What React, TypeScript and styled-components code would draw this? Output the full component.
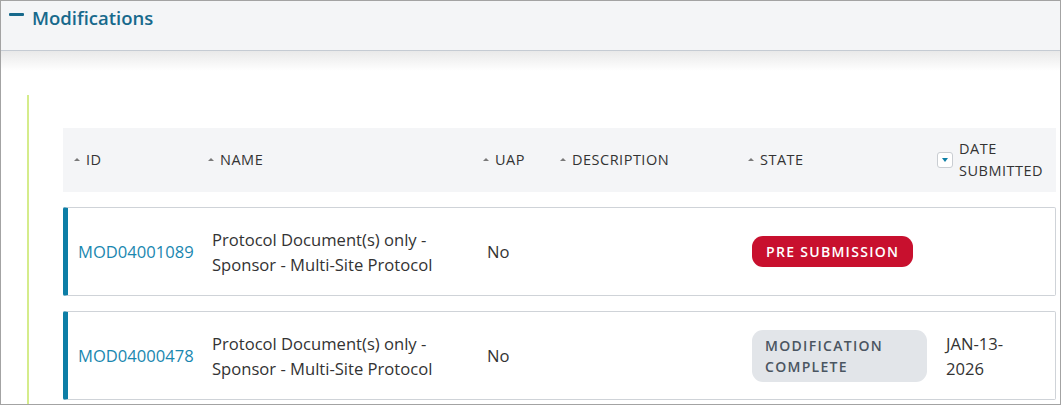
import React from "react";
import styled, { createGlobalStyle } from "styled-components";

const GlobalStyle = createGlobalStyle`
  * { box-sizing: border-box; }
  html, body { margin: 0; padding: 0; background: #ffffff; }
  body { font-family: "Open Sans", "Noto Sans", Arial, sans-serif; color: #333333; }
`;

const COLUMNS = "136px 275px 77px 188px 189px 1fr";

interface Modification {
  id: string;
  name: string[];
  uap: string;
  description: string;
  state: "pre" | "complete";
  stateLabel: string[];
  date: string[];
}

const rows: Modification[] = [
  {
    id: "MOD04001089",
    name: ["Protocol Document(s) only -", "Sponsor - Multi-Site Protocol"],
    uap: "No",
    description: "",
    state: "pre",
    stateLabel: ["PRE SUBMISSION"],
    date: [],
  },
  {
    id: "MOD04000478",
    name: ["Protocol Document(s) only -", "Sponsor - Multi-Site Protocol"],
    uap: "No",
    description: "",
    state: "complete",
    stateLabel: ["MODIFICATION", "COMPLETE"],
    date: ["JAN-13-", "2026"],
  },
];

const headers = [
  { label: "ID", pad: 6 },
  { label: "NAME", pad: 4 },
  { label: "UAP", pad: 4 },
  { label: "DESCRIPTION", pad: 4 },
  { label: "STATE", pad: 4 },
];

const App = () => {
  return (
    <>
      <GlobalStyle />
      <Frame>
        <SectionHeader>
          <Minus />
          <Title>Modifications</Title>
        </SectionHeader>
        <Body>
          <Rail>
            <Table>
              <HeadRow>
                {headers.map((h) => (
                  <HeadCell key={h.label} pad={h.pad}>
                    <SortUp />
                    <span>{h.label}</span>
                  </HeadCell>
                ))}
                <HeadCell pad={4}>
                  <SortButton>
                    <SortDown />
                  </SortButton>
                  <Stack>
                    <span>DATE</span>
                    <span>SUBMITTED</span>
                  </Stack>
                </HeadCell>
              </HeadRow>
              {rows.map((r) => (
                <Row key={r.id}>
                  <Cell pad={10}>
                    <IdLink href="#">{r.id}</IdLink>
                  </Cell>
                  <Cell pad={8}>
                    <Stack>
                      {r.name.map((n) => (
                        <span key={n}>{n}</span>
                      ))}
                    </Stack>
                  </Cell>
                  <Cell pad={8}>{r.uap}</Cell>
                  <Cell pad={8}>{r.description}</Cell>
                  <Cell pad={8}>
                    <Badge variant={r.state}>
                      {r.stateLabel.map((s) => (
                        <span key={s}>{s}</span>
                      ))}
                    </Badge>
                  </Cell>
                  <Cell pad={13}>
                    <Stack>
                      {r.date.map((d) => (
                        <span key={d}>{d}</span>
                      ))}
                    </Stack>
                  </Cell>
                </Row>
              ))}
            </Table>
          </Rail>
        </Body>
      </Frame>
    </>
  );
};

export default App;

const Frame = styled.div`
  width: 1061px;
  height: 405px;
  border: 1px solid #a3a3a3;
  overflow: hidden;
  display: flex;
  flex-direction: column;
`;

const SectionHeader = styled.div`
  height: 50px;
  flex-shrink: 0;
  display: flex;
  align-items: flex-start;
  gap: 8px;
  padding: 4px 0 0 8px;
  background: #f4f5f7;
  border-bottom: 1px solid #c5cbd3;
`;

const Minus = styled.span`
  width: 15px;
  height: 3px;
  margin-top: 8px;
  background: #17698c;
  border-radius: 1px;
`;

const Title = styled.h2`
  margin: 0;
  font-size: 18.5px;
  line-height: 26px;
  font-weight: 600;
  color: #17698c;
`;

const Body = styled.div`
  flex: 1;
  padding: 44px 4px 0 26px;
  background: linear-gradient(#e9e9e9 0px, #ffffff 20px);
`;

const Rail = styled.div`
  height: 100%;
  border-left: 2px solid #d5ec8b;
  padding: 33px 0 0 34px;
`;

const Table = styled.div`
  display: flex;
  flex-direction: column;
  gap: 15px;
`;

const HeadRow = styled.div`
  display: grid;
  grid-template-columns: ${COLUMNS};
  height: 64px;
  padding-left: 5px;
  background: #f4f5f7;
`;

const HeadCell = styled.div<{ pad: number }>`
  display: flex;
  align-items: center;
  gap: 6px;
  padding-left: ${({ pad }) => pad}px;
  font-size: 14.5px;
  letter-spacing: 0.5px;
  color: #333333;
  line-height: 22px;
  white-space: nowrap;
`;

const SortUp = styled.span`
  width: 0;
  height: 0;
  border-left: 3px solid transparent;
  border-right: 3px solid transparent;
  border-bottom: 3px solid #7a7a7a;
  margin-top: -2px;
`;

const SortButton = styled.span`
  width: 16px;
  height: 16px;
  border: 1px solid #c9cdd2;
  border-radius: 3px;
  background: #ffffff;
  display: flex;
  align-items: center;
  justify-content: center;
`;

const SortDown = styled.span`
  width: 0;
  height: 0;
  border-left: 3.5px solid transparent;
  border-right: 3.5px solid transparent;
  border-top: 4px solid #0f7fa6;
`;

const Stack = styled.div`
  display: flex;
  flex-direction: column;
`;

const Row = styled.div`
  display: grid;
  grid-template-columns: ${COLUMNS};
  height: 89px;
  border: 1px solid #cfd3d8;
  border-left: 5px solid #0d7ea6;
  border-radius: 2px;
  background: #ffffff;
`;

const Cell = styled.div<{ pad: number }>`
  display: flex;
  align-items: center;
  padding-left: ${({ pad }) => pad}px;
  font-size: 16.6px;
  line-height: 25px;
  color: #333333;
  white-space: nowrap;
`;

const IdLink = styled.a`
  color: #1a87b0;
  text-decoration: none;
`;

const Badge = styled.div<{ variant: "pre" | "complete" }>`
  display: flex;
  flex-direction: column;
  padding: ${({ variant }) => (variant === "pre" ? "4px 14px" : "5px 13px")};
  padding-right: ${({ variant }) => (variant === "pre" ? "14px" : "44px")};
  border-radius: 11px;
  font-size: 14px;
  font-weight: 600;
  letter-spacing: 1.3px;
  line-height: ${({ variant }) => (variant === "pre" ? "23px" : "21px")};
  background: ${({ variant }) => (variant === "pre" ? "#c8102e" : "#e2e5e9")};
  color: ${({ variant }) => (variant === "pre" ? "#ffffff" : "#4a5561")};
`;
